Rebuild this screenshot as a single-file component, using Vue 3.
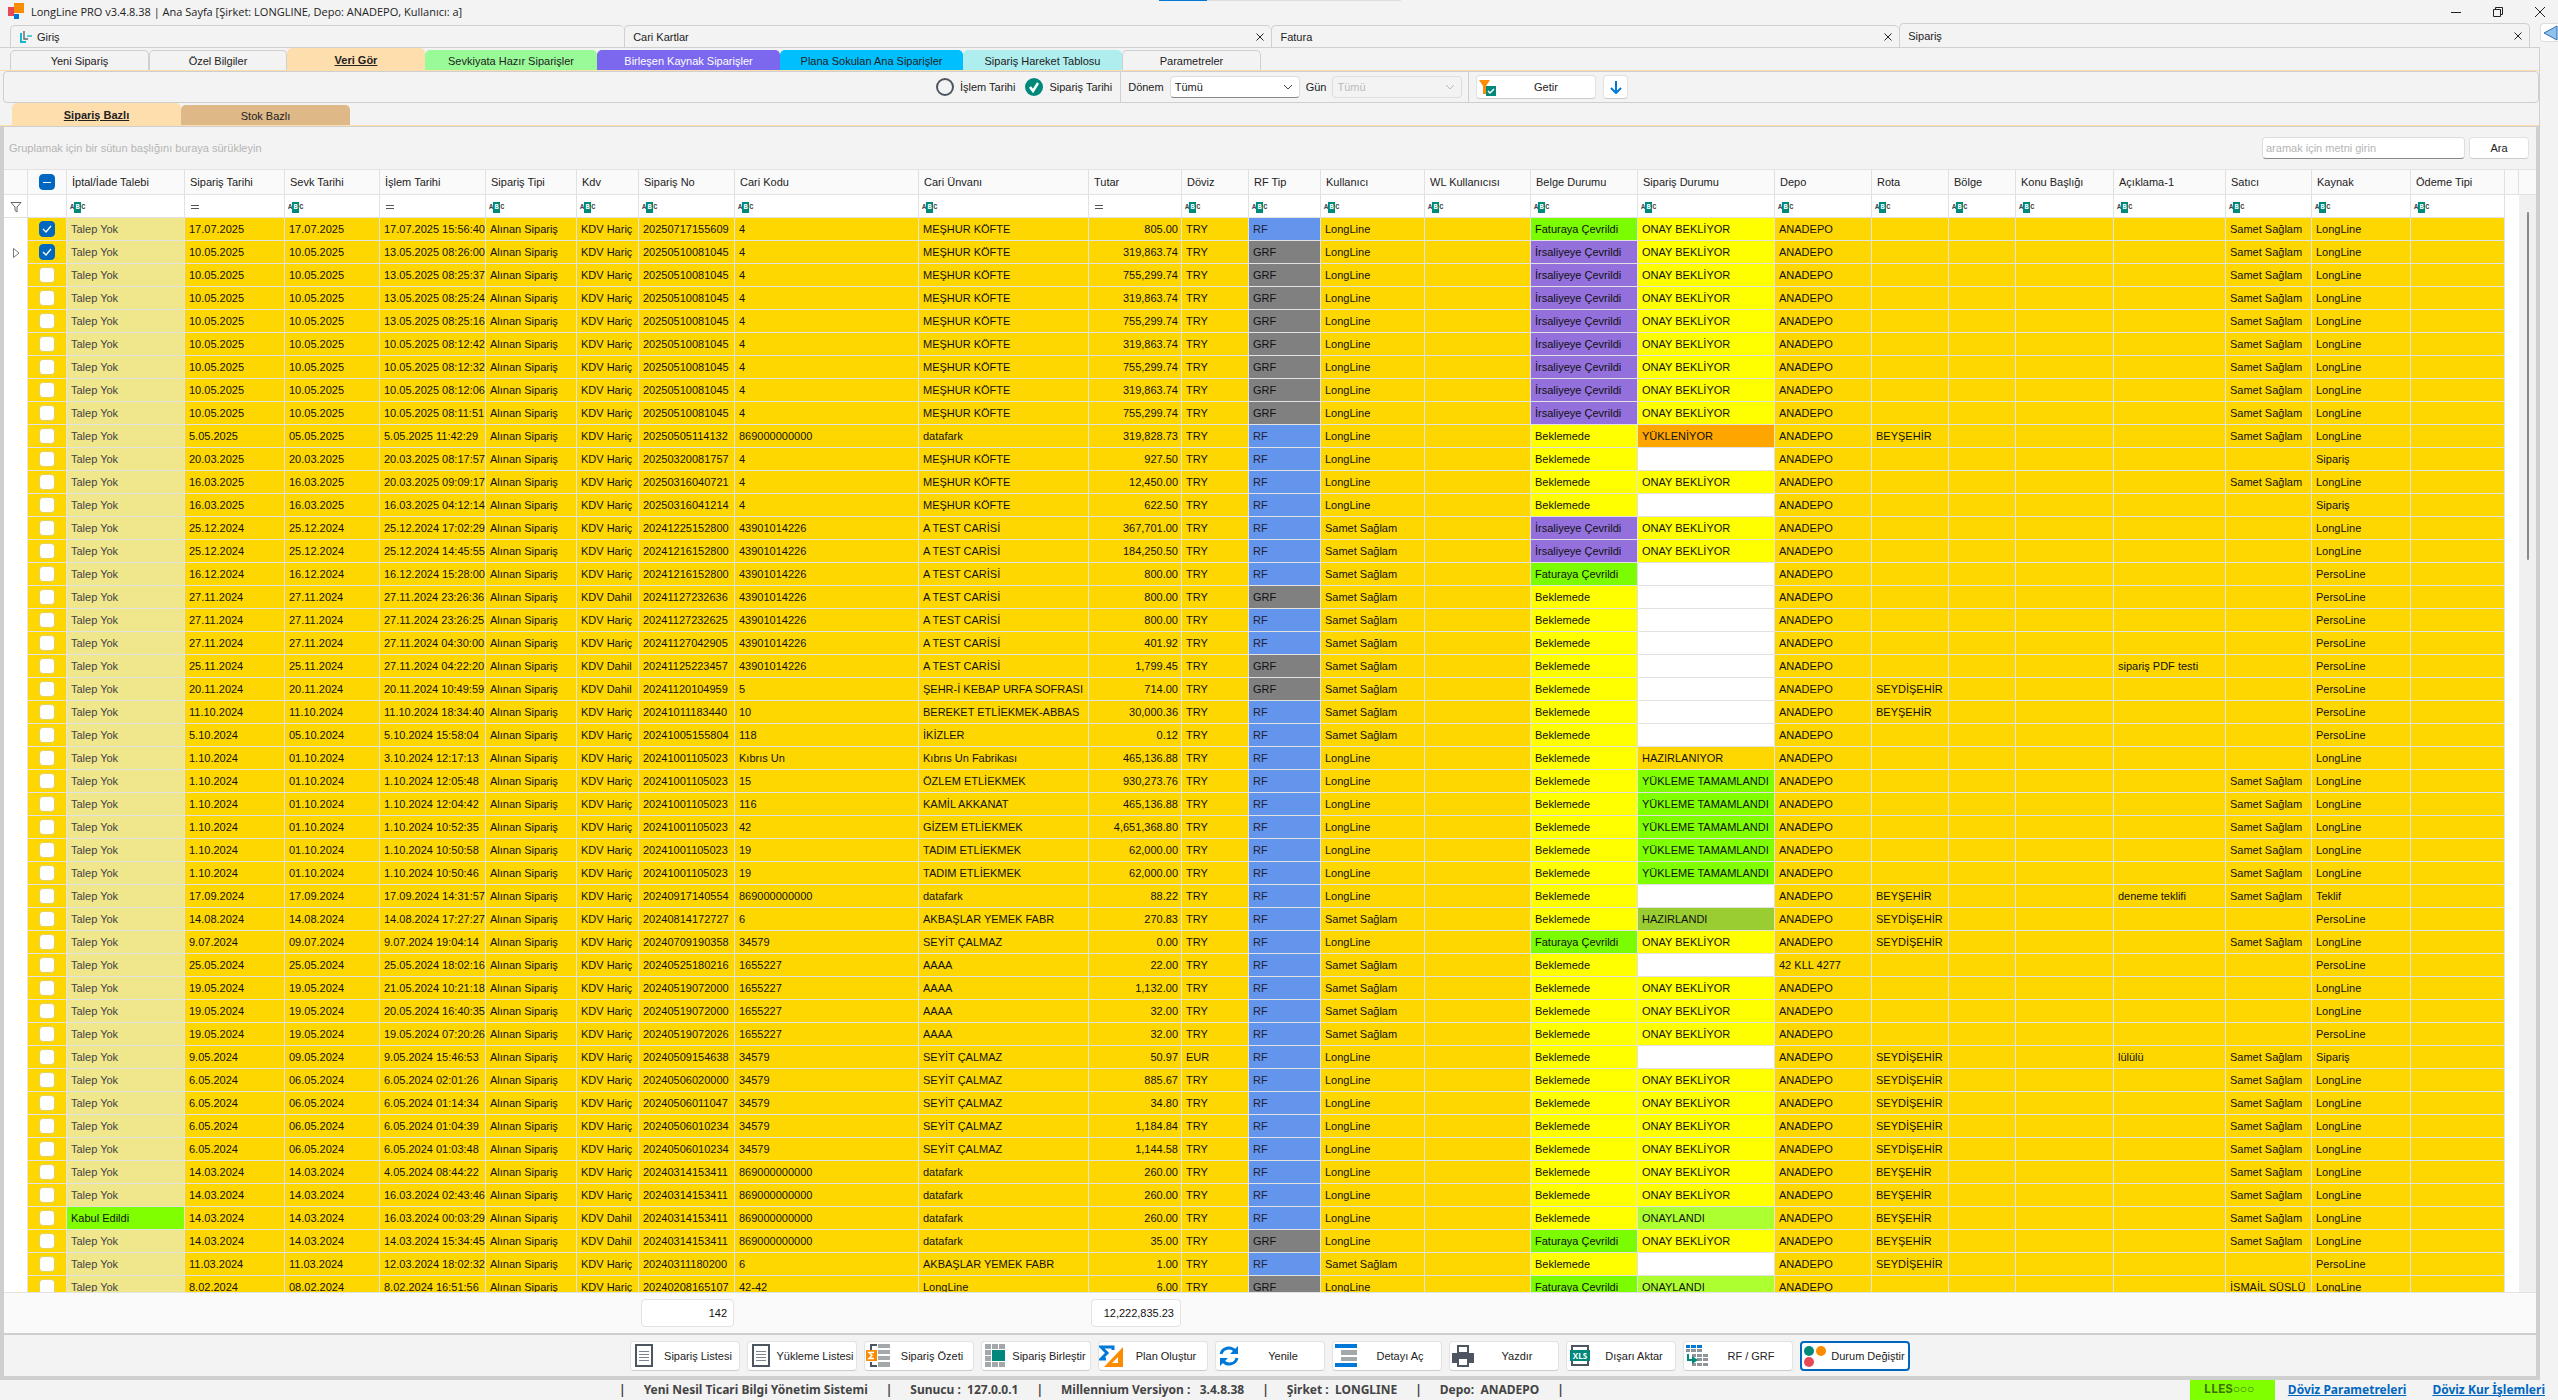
<template>
  <div class="app">
    <header class="titlebar">
      <svg class="logo" width="18" height="18" viewBox="0 0 18 18">
        <rect x="1" y="4" width="6" height="9" fill="#e84855" />
        <rect x="7" y="0" width="10" height="10" fill="#fb8c00" />
        <rect x="7" y="11" width="5" height="5" fill="#0078d7" />
      </svg>
      <span class="title">LongLine PRO v3.4.8.38 | Ana Sayfa [Şirket: LONGLINE, Depo: ANADEPO, Kullanıcı: a]</span>
      <div class="top-progress"><i></i></div>
      <div class="window-buttons">
        <button type="button" aria-label="Simge durumuna küçült">
          <svg width="12" height="12" viewBox="0 0 12 12"><path d="M1 6.5h10" /></svg>
        </button>
        <button type="button" aria-label="Önceki boyut">
          <svg width="12" height="12" viewBox="0 0 12 12"><path d="M1.5 3.5h7v7h-7zM3.5 3V1.5h7v7H9" /></svg>
        </button>
        <button type="button" aria-label="Kapat">
          <svg width="12" height="12" viewBox="0 0 12 12"><path d="M1 1l10 10M11 1L1 11" /></svg>
        </button>
      </div>
    </header>

    <nav class="page-tabs">
      <div
        v-for="tab in pageTabs"
        :key="tab.name"
        class="page-tab"
        :class="{ active: tab.name === activePage }"
        :style="{ flexGrow: tab.grow }"
      >
        <button type="button" class="page-tab-name" @click="activePage = tab.name">
          <svg v-if="tab.icon" width="14" height="14" viewBox="0 0 14 14" fill="none">
            <path d="M2 3v9h5" stroke="#14b8c8" stroke-width="2" />
            <path d="M5 1v8h4" stroke="#5c6a70" stroke-width="1.4" />
            <path d="M8 6h5" stroke="#14b8c8" stroke-width="1.4" />
          </svg>
          {{ tab.name }}
        </button>
        <button v-if="tab.closable" type="button" class="tab-close" :aria-label="tab.name + ' kapat'">
          <svg width="10" height="10" viewBox="0 0 10 10"><path d="M1.5 1.5l7 7M8.500 1.5l-7 7" /></svg>
        </button>
      </div>
      <button type="button" class="side-toggle" aria-label="Paneli aç">
        <svg width="15" height="16" viewBox="0 0 15 16">
          <path d="M1 8L14 1v14z" fill="#8fc3ee" stroke="#2f6fb5" />
        </svg>
      </button>
    </nav>

    <main class="workspace">
      <nav class="color-tabs">
        <button
          v-for="tab in viewTabs"
          :key="tab.name"
          type="button"
          class="color-tab"
          :class="[tab.color, { active: tab.name === activeView }]"
          :style="{ width: tab.width + 'px' }"
          @click="activeView = tab.name"
        >{{ tab.name }}</button>
      </nav>

      <section class="toolbar">
        <div class="tool-group grow">
          <label class="radio"><input v-model="dateKind" type="radio" name="date-kind" value="islem">İşlem Tarihi</label>
          <label class="radio"><input v-model="dateKind" type="radio" name="date-kind" value="siparis">Sipariş Tarihi</label>
        </div>
        <div class="tool-group period">
          <label for="donem">Dönem</label>
          <select id="donem"><option>Tümü</option></select>
          <label for="gun">Gün</label>
          <select id="gun" disabled><option>Tümü</option></select>
        </div>
        <div class="tool-group fetch">
          <button type="button" class="btn fetch-btn">
            <svg width="17" height="17" viewBox="0 0 17 17">
              <path d="M0 1h11L7 7v8H4V7z" fill="#fb8c00" />
              <rect x="7" y="7" width="10" height="10" fill="#00897b" />
              <path d="M9 12l2 2 4-4" fill="none" stroke="#fff" stroke-width="1.5" />
            </svg>
            <span>Getir</span>
          </button>
          <button type="button" class="btn down-btn" aria-label="Aşağı">
            <svg width="12" height="14" viewBox="0 0 12 14">
              <path d="M6 1v11M1 8l5 5 5-5" fill="none" stroke="#0078d7" stroke-width="2" />
            </svg>
          </button>
        </div>
      </section>

      <nav class="color-tabs sub">
        <button
          v-for="tab in groupTabs"
          :key="tab"
          type="button"
          class="color-tab tan"
          :class="{ active: tab === activeGroup }"
          @click="activeGroup = tab"
        >{{ tab }}</button>
      </nav>

      <section class="grid-panel">
        <div class="group-bar">
          <span>Gruplamak için bir sütun başlığını buraya sürükleyin</span>
          <div class="search">
            <input v-model="search" type="text" placeholder="aramak için metni girin" aria-label="Ara">
            <button type="button" class="btn">Ara</button>
          </div>
        </div>

        <div class="grid-body">
          <div class="grid-scroll">
            <table class="grid">
              <colgroup>
                <col class="c-mark"><col class="c-check">
                <col v-for="col in columns" :key="col.key" :style="{ width: col.width + 'px' }">
                <col>
              </colgroup>
              <thead>
                <tr class="head">
                  <th></th>
                  <th class="check"><input type="checkbox" class="mixed" aria-label="Tümünü seç"></th>
                  <th v-for="col in columns" :key="col.key">{{ col.title }}</th>
                  <th></th>
                </tr>
                <tr class="filter">
                  <td class="check">
                    <svg width="12" height="12" viewBox="0 0 12 12"><path d="M1 1.5h10L7 6v5L5 9.500V6z" fill="none" stroke="#666" /></svg>
                  </td>
                  <td></td>
                  <td v-for="col in columns" :key="col.key">
                    <svg v-if="col.equals" class="eq" width="10" height="6" viewBox="0 0 10 6"><path d="M1 1.500h8M1 4.500h8" stroke="#555" /></svg>
                    <span v-else class="abc">A<b>B</b>C</span>
                  </td>
                  <td class="rest"></td>
                </tr>
              </thead>
              <tbody>
                <tr v-for="(row, index) in rows" :key="index">
                  <td class="mark">
                    <svg v-if="index === 1" width="8" height="12" viewBox="0 0 8 12"><path d="M1.500 1.500L7 6 1.500 10.500z" fill="none" stroke="#777" /></svg>
                  </td>
                  <td class="check"><input v-model="row.selected" type="checkbox" :aria-label="'Satır ' + (index + 1)"></td>
                  <td
                    v-for="col in columns"
                    :key="col.key"
                    :class="[{ number: col.key === 'tutar' }, cellColor(col.key, row[col.key])]"
                  >{{ row[col.key] }}</td>
                  <td class="rest"></td>
                </tr>
              </tbody>
            </table>
          </div>
          <div class="scrollbar">
            <div class="scroll-head"></div>
            <div class="scroll-thumb"></div>
          </div>
        </div>

        <table class="grid summary">
          <colgroup>
            <col class="c-mark"><col class="c-check">
            <col v-for="col in columns" :key="col.key" :style="{ width: col.width + 'px' }">
            <col>
          </colgroup>
          <tbody>
            <tr>
              <td></td>
              <td></td>
              <td v-for="col in columns" :key="col.key">
                <output v-if="totals[col.key]">{{ totals[col.key] }}</output>
              </td>
              <td></td>
            </tr>
          </tbody>
        </table>
      </section>

      <section class="actions">
        <button
          v-for="action in actions"
          :key="action.name"
          type="button"
          class="btn action"
          :class="{ focused: action.icon === 'status' }"
        >
          <svg width="26" height="24" viewBox="0 0 26 24">
            <template v-if="action.icon === 'list'">
              <rect x="5" y="1" width="16" height="21" fill="#fff" stroke="#4d5660" stroke-width="2" />
              <path d="M8 7.500h10M8 10.500h10M8 13.500h10M8 16.500h10" stroke="#7d858c" />
            </template>
            <template v-else-if="action.icon === 'summary'">
              <path d="M12 1H6v5M6 18v4h6" fill="none" stroke="#4d5660" stroke-width="2" />
              <path d="M13 0h12v4H13zM13 6h12v4H13zM13 12h12v4H13zM13 18h12v5H13z" fill="#a3a8ab" />
              <rect x="1" y="6" width="11" height="11" fill="#fb8c00" />
              <path d="M9 8.500H4l3 3-3 3h5" fill="none" stroke="#fff" stroke-width="1.500" />
            </template>
            <template v-else-if="action.icon === 'merge'">
              <path d="M3 0h6v5H3zM10 0h6v5h-6zM17 0h6v5h-6zM3 6h6v5H3zM3 12h6v5H3zM3 18h6v5H3zM10 18h6v5h-6zM17 18h6v5h-6z" fill="#a3a8ab" />
              <rect x="10" y="6" width="13" height="11" fill="#00897b" />
            </template>
            <template v-else-if="action.icon === 'plan'">
              <path d="M14 6V3H2l6 6-6 6h5" fill="none" stroke="#0078d7" stroke-width="3" />
              <path d="M24 3v20H5zM19 13l-6 6h6z" fill="#fb8c00" fill-rule="evenodd" />
            </template>
            <template v-else-if="action.icon === 'refresh'">
              <path d="M5 10a8 8 0 0 1 14-3M21 14a8 8 0 0 1-14 3" fill="none" stroke="#0078d7" stroke-width="3" />
              <path d="M22 2v8h-8zM4 22v-8h8z" fill="#0078d7" />
            </template>
            <template v-else-if="action.icon === 'detail'">
              <path d="M2 0h22v4H2zM2 19h22v4H2z" fill="#0078d7" />
              <path d="M8 6h16v5H8zM8 13h16v4H8z" fill="#a3a8ab" />
            </template>
            <template v-else-if="action.icon === 'print'">
              <path d="M2 9h22v10H2z" fill="#4d5660" />
              <path d="M8 2h10v7H8zM8 14h10v8H8z" fill="#fff" stroke="#4d5660" stroke-width="2" />
            </template>
            <template v-else-if="action.icon === 'xls'">
              <rect x="5" y="2" width="16" height="19" fill="#fff" stroke="#4d5660" stroke-width="2" />
              <rect x="3" y="6" width="20" height="11" fill="#00897b" />
              <text x="13" y="15" text-anchor="middle" class="xls">XLS</text>
            </template>
            <template v-else-if="action.icon === 'swap'">
              <path d="M2 1h4v3H2zM7 1h5v3H7zM13 1h5v3h-5z" fill="#0078d7" />
              <path d="M2 5h4v3H2zM7 5h5v3H7zM13 5h5v3h-5zM8 10h4v3H8zM13 10h5v3h-5zM19 10h5v3h-5zM13 14h5v3h-5zM19 14h5v3h-5zM8 19h4v3H8zM13 19h5v3h-5zM19 19h5v3h-5z" fill="#8f9599" />
              <path d="M4 10v6h6" fill="none" stroke="#00897b" stroke-width="2" />
              <path d="M8 12l6 4-6 4z" fill="#00897b" />
            </template>
            <template v-else>
              <circle cx="7" cy="7" r="5" fill="#00897b" />
              <circle cx="19" cy="7" r="5" fill="#fb8c00" />
              <circle cx="7" cy="18" r="5" fill="#e84855" />
            </template>
          </svg>
          <span>{{ action.name }}</span>
        </button>
      </section>
    </main>

    <footer class="status">
      <div class="status-items">
        <span>|</span>
        <template v-for="item in statusItems" :key="item">
          <span>{{ item }}</span><span>|</span>
        </template>
      </div>
      <div class="status-links">
        <span class="badge"><b>LLES</b>○○○</span>
        <a href="#">Döviz Parametreleri</a>
        <a href="#">Döviz Kur İşlemleri</a>
      </div>
    </footer>
  </div>
</template>

<script setup>
import { ref } from 'vue'

const pageTabs = [
  { name: 'Giriş', grow: 614, icon: true },
  { name: 'Cari Kartlar', grow: 648, closable: true },
  { name: 'Fatura', grow: 628, closable: true },
  { name: 'Sipariş', grow: 630, closable: true }
]
const viewTabs = [
  { name: 'Yeni Sipariş', width: 139 },
  { name: 'Özel Bilgiler', width: 138 },
  { name: 'Veri Gör', width: 138 },
  { name: 'Sevkiyata Hazır Siparişler', width: 172, color: 'green' },
  { name: 'Birleşen Kaynak Siparişler', width: 183, color: 'purple' },
  { name: 'Plana Sokulan Ana Siparişler', width: 183, color: 'blue' },
  { name: 'Sipariş Hareket Tablosu', width: 159, color: 'cyan' },
  { name: 'Parametreler', width: 139 }
]
const groupTabs = ['Sipariş Bazlı', 'Stok Bazlı']

const activePage = ref('Sipariş')
const activeView = ref('Veri Gör')
const activeGroup = ref('Sipariş Bazlı')
const dateKind = ref('siparis')
const search = ref('')

const columns = [
  { key: 'talep', title: 'İptal/İade Talebi', width: 118 },
  { key: 'tarih', title: 'Sipariş Tarihi', width: 100, equals: true },
  { key: 'sevk', title: 'Sevk Tarihi', width: 95 },
  { key: 'islem', title: 'İşlem Tarihi', width: 106, equals: true },
  { key: 'tip', title: 'Sipariş Tipi', width: 91 },
  { key: 'kdv', title: 'Kdv', width: 62 },
  { key: 'no', title: 'Sipariş No', width: 96 },
  { key: 'kod', title: 'Cari Kodu', width: 184 },
  { key: 'unvan', title: 'Cari Ünvanı', width: 170 },
  { key: 'tutar', title: 'Tutar', width: 93, equals: true },
  { key: 'doviz', title: 'Döviz', width: 67 },
  { key: 'rf', title: 'RF Tip', width: 72 },
  { key: 'kullanici', title: 'Kullanıcı', width: 104 },
  { key: 'wl', title: 'WL Kullanıcısı', width: 106 },
  { key: 'belge', title: 'Belge Durumu', width: 107 },
  { key: 'durum', title: 'Sipariş Durumu', width: 137 },
  { key: 'depo', title: 'Depo', width: 97 },
  { key: 'rota', title: 'Rota', width: 77 },
  { key: 'bolge', title: 'Bölge', width: 67 },
  { key: 'konu', title: 'Konu Başlığı', width: 98 },
  { key: 'aciklama', title: 'Açıklama-1', width: 112 },
  { key: 'satici', title: 'Satıcı', width: 86 },
  { key: 'kaynak', title: 'Kaynak', width: 99 },
  { key: 'odeme', title: 'Ödeme Tipi', width: 94 }
]

const L = 'LongLine'
const S = 'Samet Sağlam'
const P = 'PersoLine'
const FAT = 'Faturaya Çevrildi'
const IRS = 'İrsaliyeye Çevrildi'
const BEK = 'Beklemede'
const ONAY = 'ONAY BEKLİYOR'
const YUK = 'YÜKLEME TAMAMLANDI'
const MK = 'MEŞHUR KÖFTE'
const ATC = 'A TEST CARİSİ'
const SEY = 'SEYDİŞEHİR'
const BEY = 'BEYŞEHİR'

// tarih, işlem tarihi, sipariş no, kod, ünvan, tutar, rf, kullanıcı, belge, durum, rota, satıcı, kaynak, diğer
const raw = [
  ['17.07.2025', '17.07.2025 15:56:40', '20250717155609', '4', MK, '805.00', 'RF', L, FAT, ONAY, '', S, L, { selected: true }],
  ['10.05.2025', '13.05.2025 08:26:00', '20250510081045', '4', MK, '319,863.74', 'GRF', L, IRS, ONAY, '', S, L, { selected: true }],
  ['10.05.2025', '13.05.2025 08:25:37', '20250510081045', '4', MK, '755,299.74', 'GRF', L, IRS, ONAY, '', S, L],
  ['10.05.2025', '13.05.2025 08:25:24', '20250510081045', '4', MK, '319,863.74', 'GRF', L, IRS, ONAY, '', S, L],
  ['10.05.2025', '13.05.2025 08:25:16', '20250510081045', '4', MK, '755,299.74', 'GRF', L, IRS, ONAY, '', S, L],
  ['10.05.2025', '10.05.2025 08:12:42', '20250510081045', '4', MK, '319,863.74', 'GRF', L, IRS, ONAY, '', S, L],
  ['10.05.2025', '10.05.2025 08:12:32', '20250510081045', '4', MK, '755,299.74', 'GRF', L, IRS, ONAY, '', S, L],
  ['10.05.2025', '10.05.2025 08:12:06', '20250510081045', '4', MK, '319,863.74', 'GRF', L, IRS, ONAY, '', S, L],
  ['10.05.2025', '10.05.2025 08:11:51', '20250510081045', '4', MK, '755,299.74', 'GRF', L, IRS, ONAY, '', S, L],
  ['5.05.2025', '5.05.2025 11:42:29', '20250505114132', '869000000000', 'datafark', '319,828.73', 'RF', L, BEK, 'YÜKLENİYOR', BEY, S, L],
  ['20.03.2025', '20.03.2025 08:17:57', '20250320081757', '4', MK, '927.50', 'RF', L, BEK, '', '', '', 'Sipariş'],
  ['16.03.2025', '20.03.2025 09:09:17', '20250316040721', '4', MK, '12,450.00', 'RF', L, BEK, ONAY, '', S, L],
  ['16.03.2025', '16.03.2025 04:12:14', '20250316041214', '4', MK, '622.50', 'RF', L, BEK, '', '', '', 'Sipariş'],
  ['25.12.2024', '25.12.2024 17:02:29', '20241225152800', '43901014226', ATC, '367,701.00', 'RF', S, IRS, ONAY, '', '', L],
  ['25.12.2024', '25.12.2024 14:45:55', '20241216152800', '43901014226', ATC, '184,250.50', 'RF', S, IRS, ONAY, '', '', L],
  ['16.12.2024', '16.12.2024 15:28:00', '20241216152800', '43901014226', ATC, '800.00', 'RF', S, FAT, '', '', '', P],
  ['27.11.2024', '27.11.2024 23:26:36', '20241127232636', '43901014226', ATC, '800.00', 'GRF', S, BEK, '', '', '', P, { kdv: 'KDV Dahil' }],
  ['27.11.2024', '27.11.2024 23:26:25', '20241127232625', '43901014226', ATC, '800.00', 'RF', S, BEK, '', '', '', P],
  ['27.11.2024', '27.11.2024 04:30:00', '20241127042905', '43901014226', ATC, '401.92', 'RF', S, BEK, '', '', '', P],
  ['25.11.2024', '27.11.2024 04:22:20', '20241125223457', '43901014226', ATC, '1,799.45', 'GRF', S, BEK, '', '', '', P, { kdv: 'KDV Dahil', aciklama: 'sipariş PDF testi' }],
  ['20.11.2024', '20.11.2024 10:49:59', '20241120104959', '5', 'ŞEHR-İ KEBAP URFA SOFRASI', '714.00', 'GRF', S, BEK, '', SEY, '', P, { kdv: 'KDV Dahil' }],
  ['11.10.2024', '11.10.2024 18:34:40', '20241011183440', '10', 'BEREKET ETLİEKMEK-ABBAS', '30,000.36', 'RF', S, BEK, '', BEY, '', P],
  ['5.10.2024', '5.10.2024 15:58:04', '20241005155804', '118', 'İKİZLER', '0.12', 'RF', S, BEK, '', '', '', P],
  ['1.10.2024', '3.10.2024 12:17:13', '20241001105023', 'Kıbrıs Un', 'Kıbrıs Un Fabrikası', '465,136.88', 'RF', L, BEK, 'HAZIRLANIYOR', '', '', L],
  ['1.10.2024', '1.10.2024 12:05:48', '20241001105023', '15', 'ÖZLEM ETLİEKMEK', '930,273.76', 'RF', L, BEK, YUK, '', S, L],
  ['1.10.2024', '1.10.2024 12:04:42', '20241001105023', '116', 'KAMİL AKKANAT', '465,136.88', 'RF', L, BEK, YUK, '', S, L],
  ['1.10.2024', '1.10.2024 10:52:35', '20241001105023', '42', 'GİZEM ETLİEKMEK', '4,651,368.80', 'RF', L, BEK, YUK, '', S, L],
  ['1.10.2024', '1.10.2024 10:50:58', '20241001105023', '19', 'TADIM ETLİEKMEK', '62,000.00', 'RF', L, BEK, YUK, '', S, L],
  ['1.10.2024', '1.10.2024 10:50:46', '20241001105023', '19', 'TADIM ETLİEKMEK', '62,000.00', 'RF', L, BEK, YUK, '', S, L],
  ['17.09.2024', '17.09.2024 14:31:57', '20240917140554', '869000000000', 'datafark', '88.22', 'RF', L, BEK, '', BEY, S, 'Teklif', { aciklama: 'deneme teklifi' }],
  ['14.08.2024', '14.08.2024 17:27:27', '20240814172727', '6', 'AKBAŞLAR YEMEK FABR', '270.83', 'RF', S, BEK, 'HAZIRLANDI', SEY, '', P],
  ['9.07.2024', '9.07.2024 19:04:14', '20240709190358', '34579', 'SEYİT ÇALMAZ', '0.00', 'RF', L, FAT, ONAY, SEY, S, L],
  ['25.05.2024', '25.05.2024 18:02:16', '20240525180216', '1655227', 'AAAA', '22.00', 'RF', S, BEK, '', '', '', P, { depo: '42 KLL 4277' }],
  ['19.05.2024', '21.05.2024 10:21:18', '20240519072000', '1655227', 'AAAA', '1,132.00', 'RF', S, BEK, ONAY, '', '', L],
  ['19.05.2024', '20.05.2024 16:40:35', '20240519072000', '1655227', 'AAAA', '32.00', 'RF', S, BEK, ONAY, '', '', L],
  ['19.05.2024', '19.05.2024 07:20:26', '20240519072026', '1655227', 'AAAA', '32.00', 'RF', S, BEK, ONAY, '', '', P],
  ['9.05.2024', '9.05.2024 15:46:53', '20240509154638', '34579', 'SEYİT ÇALMAZ', '50.97', 'RF', L, BEK, '', SEY, S, 'Sipariş', { doviz: 'EUR', aciklama: 'lülülü' }],
  ['6.05.2024', '6.05.2024 02:01:26', '20240506020000', '34579', 'SEYİT ÇALMAZ', '885.67', 'RF', L, BEK, ONAY, SEY, S, L],
  ['6.05.2024', '6.05.2024 01:14:34', '20240506011047', '34579', 'SEYİT ÇALMAZ', '34.80', 'RF', L, BEK, ONAY, SEY, S, L],
  ['6.05.2024', '6.05.2024 01:04:39', '20240506010234', '34579', 'SEYİT ÇALMAZ', '1,184.84', 'RF', L, BEK, ONAY, SEY, S, L],
  ['6.05.2024', '6.05.2024 01:03:48', '20240506010234', '34579', 'SEYİT ÇALMAZ', '1,144.58', 'RF', L, BEK, ONAY, SEY, S, L],
  ['14.03.2024', '4.05.2024 08:44:22', '20240314153411', '869000000000', 'datafark', '260.00', 'RF', L, BEK, ONAY, BEY, S, L],
  ['14.03.2024', '16.03.2024 02:43:46', '20240314153411', '869000000000', 'datafark', '260.00', 'RF', L, BEK, ONAY, BEY, S, L],
  ['14.03.2024', '16.03.2024 00:03:29', '20240314153411', '869000000000', 'datafark', '260.00', 'RF', L, BEK, 'ONAYLANDI', BEY, S, L, { kdv: 'KDV Dahil', talep: 'Kabul Edildi' }],
  ['14.03.2024', '14.03.2024 15:34:45', '20240314153411', '869000000000', 'datafark', '35.00', 'GRF', L, FAT, ONAY, BEY, S, L, { kdv: 'KDV Dahil' }],
  ['11.03.2024', '12.03.2024 18:02:32', '20240311180200', '6', 'AKBAŞLAR YEMEK FABR', '1.00', 'RF', S, BEK, '', SEY, '', P],
  ['8.02.2024', '8.02.2024 16:51:56', '20240208165107', '42-42', 'LongLine', '6.00', 'GRF', L, FAT, 'ONAYLANDI', '', 'İSMAİL SÜSLÜ', L]
]

const rows = ref(raw.map(([tarih, islem, no, kod, unvan, tutar, rf, kullanici, belge, durum, rota, satici, kaynak, extra]) => ({
  selected: false,
  talep: 'Talep Yok',
  tip: 'Alınan Sipariş',
  kdv: 'KDV Hariç',
  doviz: 'TRY',
  depo: 'ANADEPO',
  sevk: tarih.padStart(10, '0'),
  tarih, islem, no, kod, unvan, tutar, rf, kullanici, belge, durum, rota, satici, kaynak,
  ...extra
})))

const colors = {
  talep: { 'Talep Yok': 'khaki', 'Kabul Edildi': 'chartreuse' },
  rf: { RF: 'cornflower', GRF: 'gray' },
  belge: { [FAT]: 'lawn', [IRS]: 'violet', [BEK]: 'yellow' },
  durum: {
    '': 'white',
    [ONAY]: 'yellow',
    [YUK]: 'chartreuse',
    'YÜKLENİYOR': 'orange',
    'HAZIRLANDI': 'olive',
    'ONAYLANDI': 'lime'
  }
}
const cellColor = (key, value) => colors[key]?.[value]

const totals = { no: '142', tutar: '12,222,835.23' }

const actions = [
  { name: 'Sipariş Listesi', icon: 'list' },
  { name: 'Yükleme Listesi', icon: 'list' },
  { name: 'Sipariş Özeti', icon: 'summary' },
  { name: 'Sipariş Birleştir', icon: 'merge' },
  { name: 'Plan Oluştur', icon: 'plan' },
  { name: 'Yenile', icon: 'refresh' },
  { name: 'Detayı Aç', icon: 'detail' },
  { name: 'Yazdır', icon: 'print' },
  { name: 'Dışarı Aktar', icon: 'xls' },
  { name: 'RF / GRF', icon: 'swap' },
  { name: 'Durum Değiştir', icon: 'status' }
]

const statusItems = [
  'Yeni Nesil Ticari Bilgi Yönetim Sistemi',
  'Sunucu :  127.0.0.1',
  'Millennium Versiyon :   3.4.8.38',
  'Şirket :  LONGLINE',
  'Depo:  ANADEPO'
]
</script>

<style>
body { background: #f3f3f3; }
</style>

<style scoped>
.app {
  height: 100vh;
  display: flex;
  flex-direction: column;
  background: #f3f3f3;
  color: #222;
  font-family: "Liberation Sans", sans-serif;
  font-size: 11px;
  line-height: 16px;
  overflow: hidden;
}
.app * { box-sizing: border-box; }
button, input, select { font: inherit; color: inherit; margin: 0; padding: 0; }
button { background: none; border: none; }

.titlebar { position: relative; display: flex; align-items: center; gap: 6px; height: 23px; padding-left: 7px; }
.title { font-family: "Open Sans", sans-serif; }
.top-progress {
  position: absolute; top: 0; left: 50%; width: 242px; height: 1px;
  margin-left: -120px; background: #dedede;
}
.top-progress i { display: block; width: 48px; height: 1px; background: #0078d7; }
.window-buttons { display: flex; gap: 30px; margin-left: auto; padding-right: 12px; }
.window-buttons button { display: flex; }
.window-buttons svg, .tab-close svg { fill: none; stroke: #222; }

.page-tabs { display: flex; align-items: flex-end; height: 24px; padding-left: 10px; }
.page-tab {
  flex: 1 1 0; display: flex; align-items: center; height: 22px; padding: 0 6px 0 8px;
  border: 1px solid #cfcfcf; border-right: none; border-bottom: none; border-radius: 5px 5px 0 0;
}
.page-tab.active { height: 24px; border-right: 1px solid #cfcfcf; }
.page-tab-name { flex: 1; display: flex; align-items: center; gap: 4px; text-align: left; }
.tab-close { display: flex; }
.side-toggle {
  align-self: flex-start; width: 18px; height: 19px; margin-left: 10px; padding: 1px 2px;
  background: #fff; border: 1px solid #ddd; border-right: none; border-radius: 4px 0 0 4px; overflow: hidden;
}

.workspace {
  flex: 1; min-height: 0; display: flex; flex-direction: column;
  margin-right: 18px; border-top: 1px solid #cfcfcf; border-right: 1px solid #cfcfcf;
}
.color-tabs { display: flex; align-items: flex-end; height: 23px; padding-left: 10px; border-bottom: 1px solid #ffdead; }
.color-tabs.sub { padding-left: 12px; }
.color-tab { height: 20px; border: 1px solid #cfcfcf; border-bottom: none; border-radius: 5px 5px 0 0; }
.color-tab.green { background: #98fb98; border-color: #98fb98; }
.color-tab.purple { background: #7b68ee; border-color: #7b68ee; color: #fff; }
.color-tab.blue { background: #00bfff; border-color: #00bfff; }
.color-tab.cyan { background: #afeeee; border-color: #afeeee; }
.color-tab.tan { width: 169px; background: #deb887; border-color: #deb887; }
.color-tab.active {
  height: 22px; background: #ffdead; border-color: #ffdead;
  font-weight: 700; text-decoration: underline;
}

.toolbar { display: flex; height: 32px; margin-left: 3px; border: 1px solid #cfcfcf; border-radius: 4px; }
.tool-group { display: flex; align-items: center; gap: 6px; border-right: 1px solid #cfcfcf; }
.tool-group.grow { flex: 1117 1 0; justify-content: flex-end; gap: 10px; padding-right: 8px; }
.tool-group.period { padding: 0 6px 0 7px; }
.tool-group.fetch { flex: 1070 1 0; border-right: none; padding-left: 7px; gap: 7px; }
.radio { display: flex; align-items: center; gap: 6px; }
.radio input {
  appearance: none; width: 18px; height: 18px; border: 2px solid #4d5660; border-radius: 50%;
}
.radio input:checked {
  border: none;
  background: #00897b url("data:image/svg+xml,%3Csvg xmlns='http://www.w3.org/2000/svg' viewBox='0 0 18 18'%3E%3Cpath d='M5 9l3 4 5-8' fill='none' stroke='white' stroke-width='2.500'/%3E%3C/svg%3E");
}
select {
  appearance: none; width: 130px; height: 22px; padding: 0 4px;
  border: 1px solid #ddd; border-bottom: 1px solid #888; border-radius: 4px;
  background: #fff url("data:image/svg+xml,%3Csvg xmlns='http://www.w3.org/2000/svg' width='10' height='6'%3E%3Cpath d='M1 1l4 4 4-4' fill='none' stroke='%23444'/%3E%3C/svg%3E") no-repeat right 6px center;
}
select:disabled {
  color: #bbb; opacity: 1; background-color: #f3f3f3; border-color: #ddd;
  background-image: url("data:image/svg+xml,%3Csvg xmlns='http://www.w3.org/2000/svg' width='10' height='6'%3E%3Cpath d='M1 1l4 4 4-4' fill='none' stroke='%23bbb'/%3E%3C/svg%3E");
}
.btn {
  background: #fff; border: 1px solid #e2e2e2; border-bottom-color: #cbcbcb; border-radius: 4px;
}
.fetch-btn { display: flex; align-items: center; width: 120px; height: 24px; padding-left: 2px; }
.fetch-btn span { flex: 1; }
.down-btn { display: grid; place-items: center; width: 25px; height: 24px; }

.grid-panel {
  flex: 1; min-height: 0; display: flex; flex-direction: column;
  border: 4px solid #cfcfcf; border-width: 1px 3px 2px 4px;
}
.group-bar { display: flex; align-items: center; justify-content: space-between; height: 42px; padding: 0 7px 0 5px; color: #b5b5b5; }
.search { display: flex; gap: 4px; }
.search input {
  width: 203px; height: 22px; padding: 0 3px; color: #222; background: #fff;
  border: 1px solid #ddd; border-bottom-color: #888; border-radius: 4px;
}
.search input::placeholder { color: #b5b5b5; }
.search .btn { width: 60px; height: 22px; color: #222; }

.grid-body { flex: 1; min-height: 0; display: flex; border-bottom: 1px solid #e2e2e2; overflow: hidden; }
.grid-scroll { flex: 1; min-width: 0; overflow: hidden; background: #fff; }
.grid { width: 100%; table-layout: fixed; border-collapse: separate; border-spacing: 0; }
.c-mark { width: 24px; }
.c-check { width: 39px; }
.grid th, .grid td {
  height: 23px; padding: 0 0 0 4px; border-right: 1px solid #e2e2e2; border-bottom: 1px solid #e2e2e2;
  font-weight: 400; text-align: left; white-space: nowrap; overflow: hidden;
}
.grid .head th { height: 26px; padding: 0 0 0 5px; background: #fafafa; border-top: 1px solid #e2e2e2; }
.grid .filter td { height: 23px; padding: 0 3px; background: #fff; }
.grid th.check, .grid td.check, .grid .filter .check { padding: 0; text-align: center; }
.grid tbody td { background: #ffd700; color: #111; }
.grid .rest, .grid .filter .rest { background: #fff; border-color: #fff; }
.grid tbody .mark { background: #fff; border-bottom-color: #fff; padding-left: 8px; }
.grid tbody .rest { background: #fff; }
.grid td.number { padding-right: 3px; text-align: right; }
.grid svg { display: inline-block; vertical-align: middle; }
.grid .eq { margin-left: 2px; }
.grid .khaki { background: #f0e68c; color: #444; }
.grid .chartreuse { background: #7fff00; }
.grid .cornflower { background: #6495ed; color: #223; }
.grid .gray { background: #808080; }
.grid .lawn { background: #7cfc00; }
.grid .violet { background: #9370db; }
.grid .yellow { background: #ff0; }
.grid .white { background: #fff; }
.grid .orange { background: #ffa500; }
.grid .olive { background: #9acd32; }
.grid .lime { background: #adff2f; }
.abc {
  display: inline-flex; align-items: center; vertical-align: middle; height: 11px;
  font: 700 7px/11px "Liberation Mono", monospace; color: #444;
}
.abc b { width: 7px; height: 11px; background: #00897b; color: #fff; text-align: center; }
.grid input {
  appearance: none; display: block; width: 16px; height: 16px; margin: 0 auto;
  background: #fff; border: 1px solid #e3cf62; border-radius: 4px;
}
.grid input:checked {
  border-color: #0067c0;
  background: #0067c0 url("data:image/svg+xml,%3Csvg xmlns='http://www.w3.org/2000/svg' viewBox='0 0 14 14'%3E%3Cpath d='M3 7l3 3 5-6' fill='none' stroke='white' stroke-width='1.300'/%3E%3C/svg%3E");
}
.grid .mixed {
  border-color: #0067c0;
  background: #0067c0 linear-gradient(#fff, #fff) no-repeat center / 8px 1px;
}

.scrollbar { display: flex; flex-direction: column; align-items: center; width: 17px; background: #f0f0f0; }
.scroll-head { width: 100%; height: 26px; background: #fafafa; border: 1px solid #e2e2e2; border-width: 1px 0; }
.scroll-thumb { width: 2px; height: 31%; margin-top: 17px; background: #8a8a8a; border-radius: 1px; }

.grid.summary td { height: 40px; padding: 0 1px 0 2px; border: none; background: #fafafa; }
.summary output {
  display: block; height: 28px; padding-right: 6px; line-height: 26px; text-align: right;
  background: #fff; border: 1px solid #e2e2e2; border-radius: 4px;
}

.actions {
  display: flex; justify-content: center; align-items: center; gap: 7px; height: 45px;
  border: 4px solid #cfcfcf; border-top: none; border-right-width: 3px;
}
.action { display: flex; align-items: center; width: 110px; height: 30px; }
.action svg { flex: none; }
.action span { flex: 1; text-align: center; white-space: nowrap; }
.action.focused { border: 2px solid #0067c0; }
.xls { font: 700 8px "Open Sans", sans-serif; fill: #fff; }

.status {
  display: flex; justify-content: space-between; height: 20px; padding: 0 13px 0 619px;
  font-family: "Noto Sans", sans-serif; font-size: 12px; font-weight: 700; line-height: 20px; color: #444;
}
.status-items { display: flex; gap: 18px; white-space: pre; }
.status-links { display: flex; gap: 26px; }
.status-links a { color: #0067c0; }
.badge {
  width: 85px; margin-right: -13px; padding-left: 14px; background: #7fff00; color: #3f6f00;
  font-family: "Liberation Mono", monospace; font-size: 12px; font-weight: 400;
}
</style>
